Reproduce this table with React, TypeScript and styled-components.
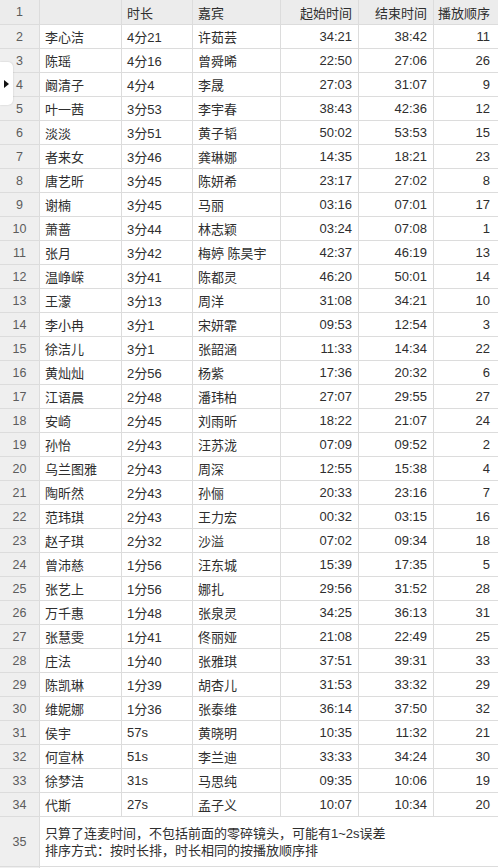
import styled, { createGlobalStyle } from "styled-components";

const GlobalStyle = createGlobalStyle`
  html, body {
    margin: 0;
    padding: 0;
    background: #ffffff;
  }
  body {
    font-family: "Liberation Sans", "Noto Sans CJK SC", sans-serif;
    font-size: 13px;
    color: #333333;
    overflow: hidden;
  }
`;

const Sheet = styled.div`
  position: relative;
  width: 498px;
  height: 868px;
  overflow: hidden;
  display: grid;
  grid-template-columns: 39px 81px 70px 87px 77px 74px 64px;
  grid-template-rows: 24px repeat(33, 23px) 49px 23px;
  gap: 1px;
  background: #dcdcdc;
`;

const Cell = styled.div<{ $align?: "left" | "right"; $head?: boolean; $last?: boolean }>`
  display: flex;
  align-items: center;
  justify-content: ${({ $align }) => ($align === "right" ? "flex-end" : "flex-start")};
  padding: ${({ $last }) => ($last ? "0 8px 0 5px" : "0 6px 0 5px")};
  background: ${({ $head }) => ($head ? "#ececec" : "#ffffff")};
  color: #2e2e2e;
  white-space: nowrap;
  overflow: hidden;
`;

const RowNum = styled.div<{ $head?: boolean }>`
  display: flex;
  align-items: center;
  justify-content: center;
  background: ${({ $head }) => ($head ? "#ececec" : "#efefef")};
  color: #5c5c5c;
  font-size: 12.5px;
`;

const NoteCell = styled.div`
  grid-column: span 6;
  display: flex;
  flex-direction: column;
  justify-content: center;
  padding-left: 5px;
  background: #ffffff;
  color: #2e2e2e;
  line-height: 17px;
  white-space: nowrap;
`;

const BlankRow = styled.div`
  grid-column: span 6;
  background: #ffffff;
`;

const Marker = styled.div`
  position: absolute;
  left: 0;
  top: 62px;
  width: 13px;
  height: 43px;
  background: #ffffff;
  border-radius: 0 5px 5px 0;
  box-shadow: 0 0 2px rgba(0, 0, 0, 0.18);
  display: flex;
  align-items: center;
  padding-left: 4px;
  box-sizing: border-box;
`;

const Arrow = styled.div`
  width: 0;
  height: 0;
  border-top: 4px solid transparent;
  border-bottom: 4px solid transparent;
  border-left: 5px solid #111111;
`;

type Row = [string, string, string, string, string, string];

const rows: Row[] = [
  ["李心洁", "4分21", "许茹芸", "34:21", "38:42", "11"],
  ["陈瑶", "4分16", "曾舜晞", "22:50", "27:06", "26"],
  ["阚清子", "4分4", "李晟", "27:03", "31:07", "9"],
  ["叶一茜", "3分53", "李宇春", "38:43", "42:36", "12"],
  ["淡淡", "3分51", "黄子韬", "50:02", "53:53", "15"],
  ["者来女", "3分46", "龚琳娜", "14:35", "18:21", "23"],
  ["唐艺昕", "3分45", "陈妍希", "23:17", "27:02", "8"],
  ["谢楠", "3分45", "马丽", "03:16", "07:01", "17"],
  ["萧蔷", "3分44", "林志颖", "03:24", "07:08", "1"],
  ["张月", "3分42", "梅婷 陈昊宇", "42:37", "46:19", "13"],
  ["温峥嵘", "3分41", "陈都灵", "46:20", "50:01", "14"],
  ["王濛", "3分13", "周洋", "31:08", "34:21", "10"],
  ["李小冉", "3分1", "宋妍霏", "09:53", "12:54", "3"],
  ["徐洁儿", "3分1", "张韶涵", "11:33", "14:34", "22"],
  ["黄灿灿", "2分56", "杨紫", "17:36", "20:32", "6"],
  ["江语晨", "2分48", "潘玮柏", "27:07", "29:55", "27"],
  ["安崎", "2分45", "刘雨昕", "18:22", "21:07", "24"],
  ["孙怡", "2分43", "汪苏泷", "07:09", "09:52", "2"],
  ["乌兰图雅", "2分43", "周深", "12:55", "15:38", "4"],
  ["陶昕然", "2分43", "孙俪", "20:33", "23:16", "7"],
  ["范玮琪", "2分43", "王力宏", "00:32", "03:15", "16"],
  ["赵子琪", "2分32", "沙溢", "07:02", "09:34", "18"],
  ["曾沛慈", "1分56", "汪东城", "15:39", "17:35", "5"],
  ["张艺上", "1分56", "娜扎", "29:56", "31:52", "28"],
  ["万千惠", "1分48", "张泉灵", "34:25", "36:13", "31"],
  ["张慧雯", "1分41", "佟丽娅", "21:08", "22:49", "25"],
  ["庄法", "1分40", "张雅琪", "37:51", "39:31", "33"],
  ["陈凯琳", "1分39", "胡杏儿", "31:53", "33:32", "29"],
  ["维妮娜", "1分36", "张泰维", "36:14", "37:50", "32"],
  ["侯宇", "57s", "黄晓明", "10:35", "11:32", "21"],
  ["何宣林", "51s", "李兰迪", "33:33", "34:24", "30"],
  ["徐梦洁", "31s", "马思纯", "09:35", "10:06", "19"],
  ["代斯", "27s", "孟子义", "10:07", "10:34", "20"],
];

function RowContent({ n, row }: { n: number; row: Row }) {
  const [name, dur, guest, start, end, order] = row;
  return (
    <>
      <RowNum>{n}</RowNum>
      <Cell>{name}</Cell>
      <Cell>{dur}</Cell>
      <Cell>{guest}</Cell>
      <Cell $align="right">{start}</Cell>
      <Cell $align="right">{end}</Cell>
      <Cell $align="right" $last>{order}</Cell>
    </>
  );
}

export default function App() {
  return (
    <>
      <GlobalStyle />
      <Sheet>
        <RowNum $head>1</RowNum>
        <Cell $head />
        <Cell $head>时长</Cell>
        <Cell $head>嘉宾</Cell>
        <Cell $head $align="right">起始时间</Cell>
        <Cell $head $align="right">结束时间</Cell>
        <Cell $head $align="right" $last>播放顺序</Cell>

        {rows.map((r, i) => (
          <RowContent key={i} n={i + 2} row={r} />
        ))}

        <RowNum>35</RowNum>
        <NoteCell>
          <span>只算了连麦时间，不包括前面的零碎镜头，可能有1~2s误差</span>
          <span>排序方式：按时长排，时长相同的按播放顺序排</span>
        </NoteCell>

        <RowNum />
        <BlankRow />

        <Marker>
          <Arrow />
        </Marker>
      </Sheet>
    </>
  );
}
